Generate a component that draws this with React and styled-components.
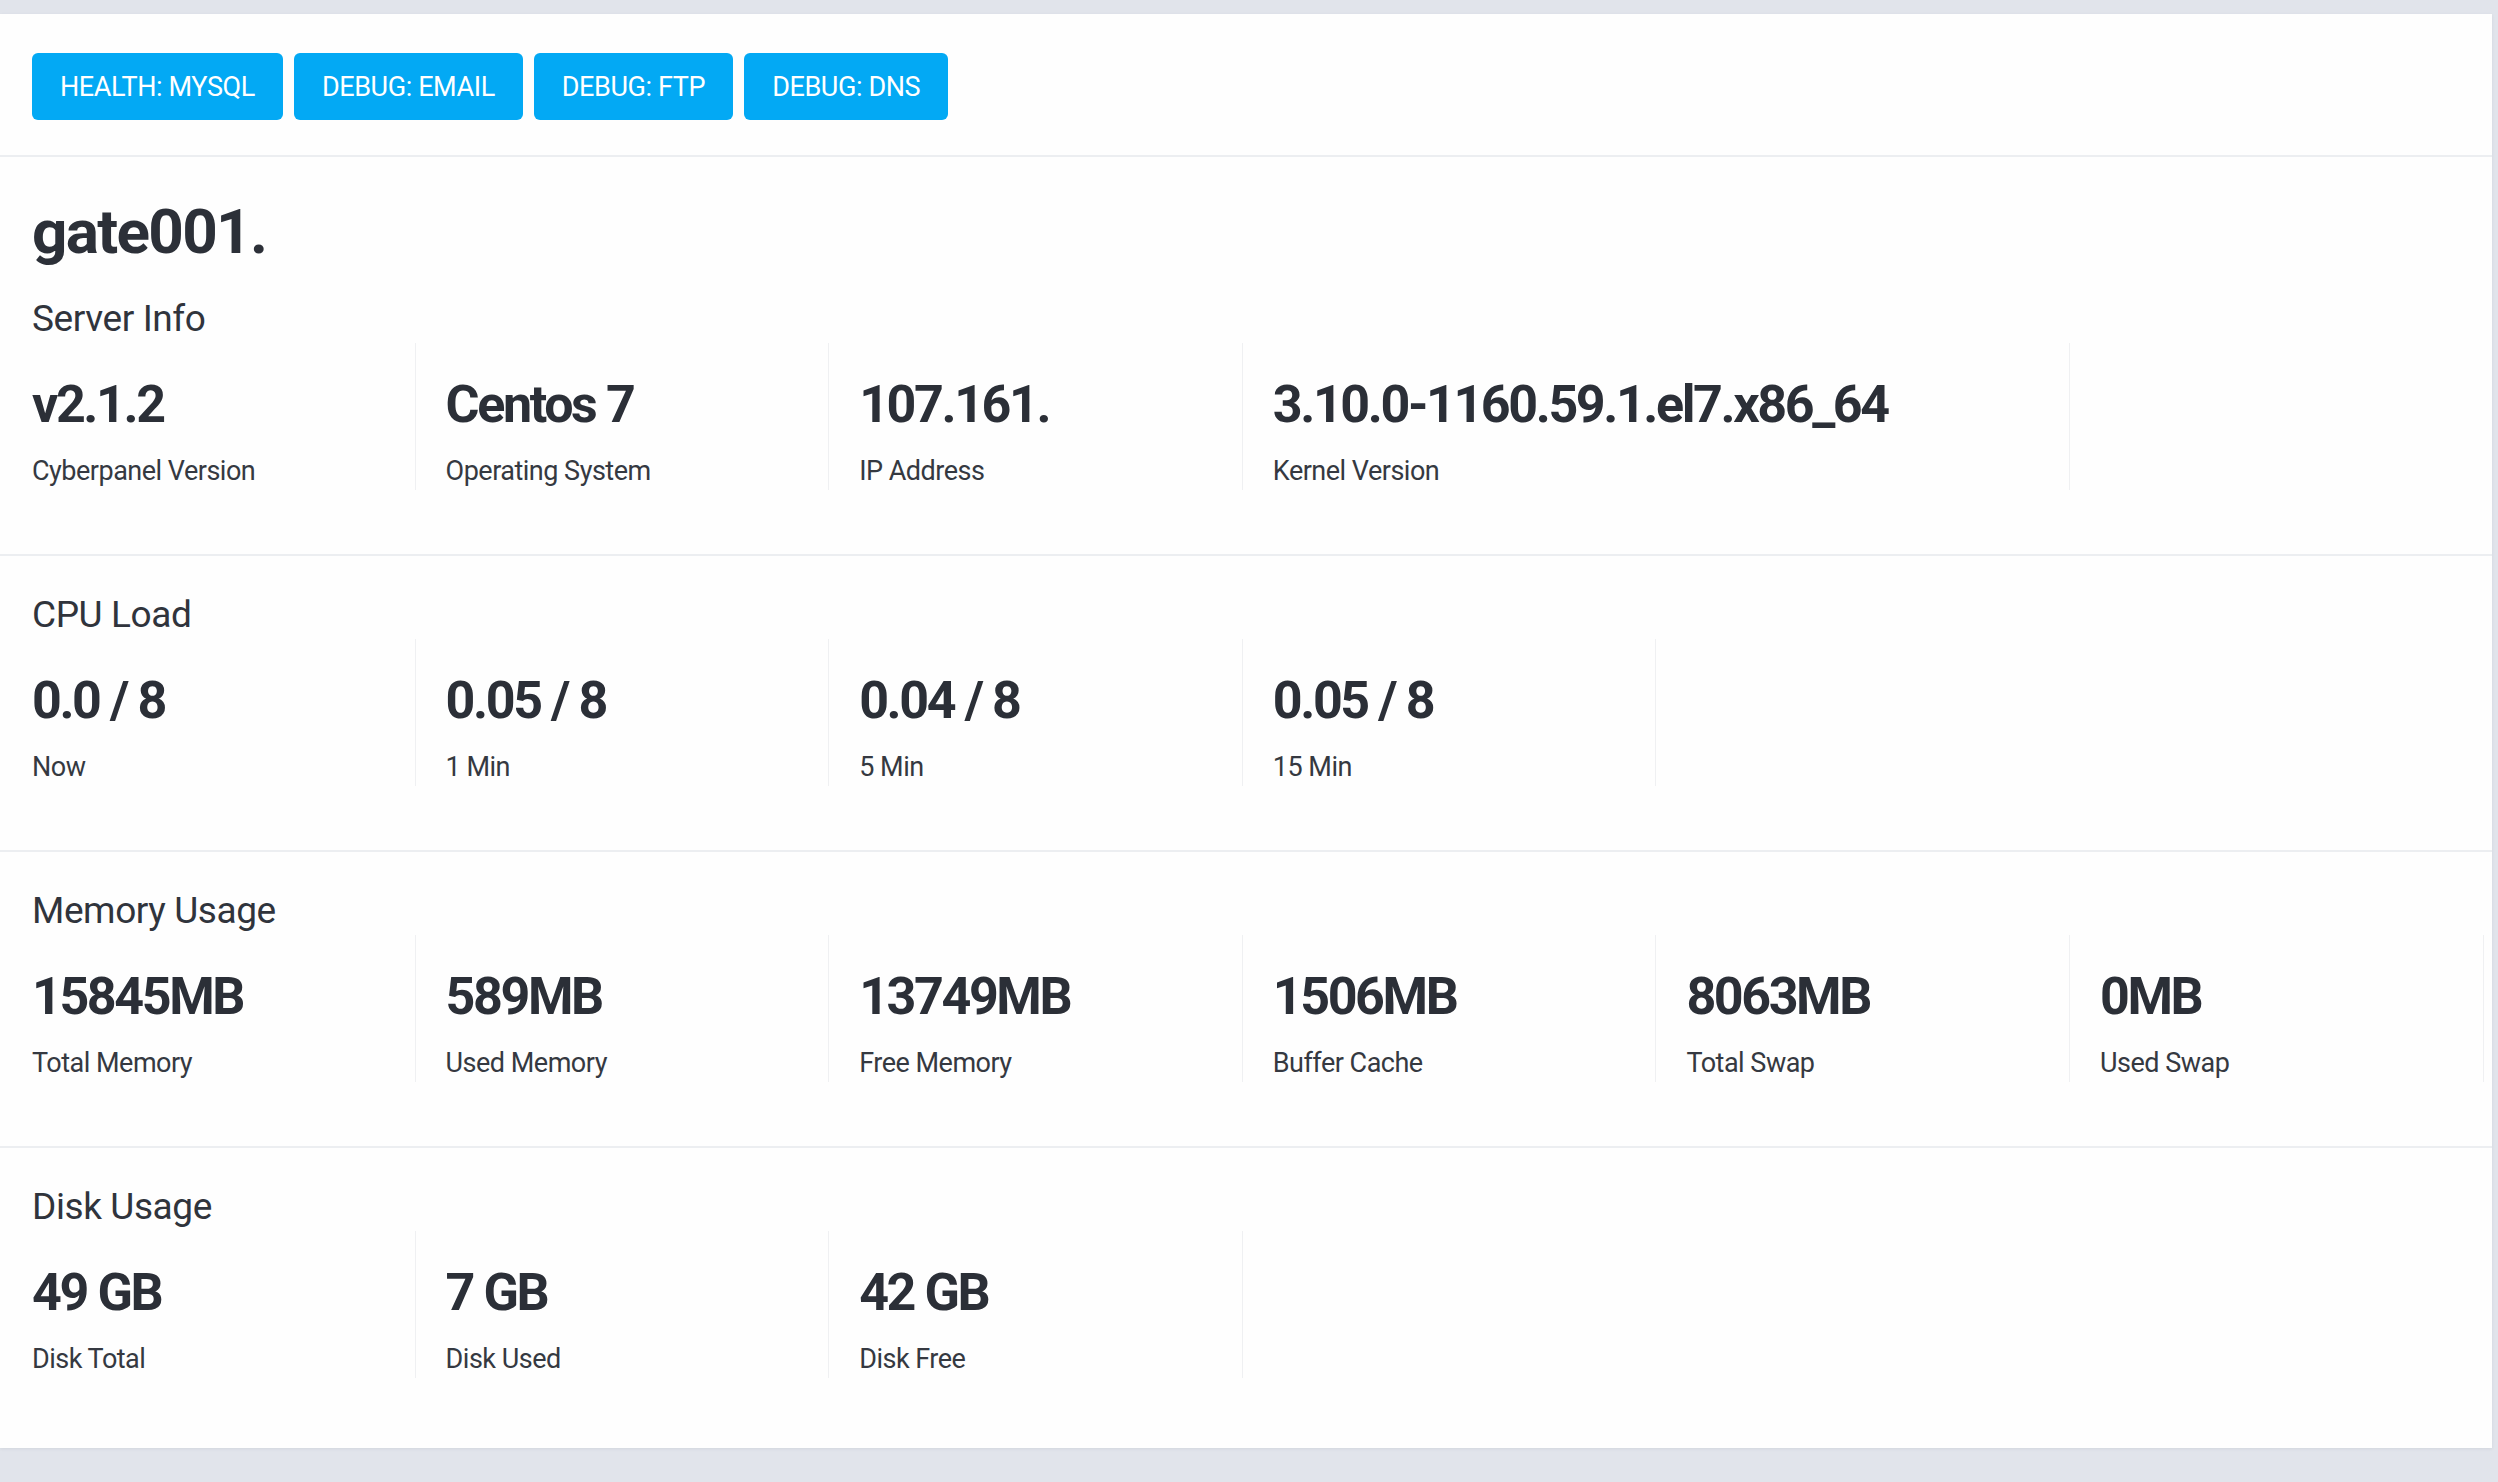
import React from "react";
import styled, { createGlobalStyle } from "styled-components";

const Global = createGlobalStyle`
  html, body { margin: 0; padding: 0; }
  body {
    background: #e1e4eb;
    font-family: Roboto, "Liberation Sans", Arial, sans-serif;
    color: #2e323a;
  }
  * { box-sizing: border-box; }
`;

const Page = styled.div`
  padding: 14px 6px 36px 0;
  min-height: 1482px;
`;

const Card = styled.div`
  background: #fefefe;
  box-shadow: 0 1px 3px rgba(40, 50, 80, 0.08);
`;

const Toolbar = styled.div`
  display: flex;
  gap: 11px;
  padding: 39px 32px 35px;
  border-bottom: 2px solid #eceef1;
`;

const Button = styled.button`
  height: 67px;
  padding: 0 28px;
  border: none;
  border-radius: 6px;
  background: #03a9f4;
  color: #fff;
  font-family: Roboto, "Liberation Sans", Arial, sans-serif;
  font-size: 27px;
  letter-spacing: -0.4px;
  font-weight: 400;
  text-transform: uppercase;
  cursor: pointer;
`;

const Section = styled.section`
  padding: ${(p) => (p.first ? "40px" : "35px")} 0 ${(p) => (p.last ? "70px" : "64px")} 32px;
  border-bottom: ${(p) => (p.last ? "none" : "2px solid #eceef1")};
`;

const Title = styled.h1`
  margin: 0 0 28px;
  font-size: 62px;
  line-height: 70px;
  font-weight: 700;
  letter-spacing: -1.7px;
  color: #2c3038;
`;

const Heading = styled.h2`
  margin: 0;
  font-size: 37px;
  line-height: 48px;
  font-weight: 400;
  letter-spacing: -0.4px;
  color: #30343c;
`;

const Row = styled.div`
  display: flex;
  margin-left: -30px;
`;

const Col = styled.div`
  width: ${(p) => (p.span || 1) * 413.6}px;
  flex: none;
  padding: 33px 0 1px 30px;
  border-right: 1px solid #eff0f2;
`;

const Value = styled.div`
  font-size: 52px;
  line-height: 58px;
  font-weight: 700;
  letter-spacing: -2.4px;
  color: #2b2f37;
  white-space: nowrap;
`;

const Label = styled.div`
  margin-top: 19px;
  font-size: 27px;
  line-height: 36px;
  font-weight: 400;
  letter-spacing: -0.5px;
  color: #353941;
`;

const Stat = ({ value, label, span }) => (
  <Col span={span}>
    <Value>{value}</Value>
    <Label>{label}</Label>
  </Col>
);

const buttons = ["Health: MySQL", "Debug: Email", "Debug: FTP", "Debug: DNS"];

const sections = [
  {
    title: "Server Info",
    items: [
      ["v2.1.2", "Cyberpanel Version"],
      ["Centos 7", "Operating System"],
      ["107.161.", "IP Address"],
      ["3.10.0-1160.59.1.el7.x86_64", "Kernel Version", 2],
    ],
  },
  {
    title: "CPU Load",
    items: [
      ["0.0 / 8", "Now"],
      ["0.05 / 8", "1 Min"],
      ["0.04 / 8", "5 Min"],
      ["0.05 / 8", "15 Min"],
    ],
  },
  {
    title: "Memory Usage",
    items: [
      ["15845MB", "Total Memory"],
      ["589MB", "Used Memory"],
      ["13749MB", "Free Memory"],
      ["1506MB", "Buffer Cache"],
      ["8063MB", "Total Swap"],
      ["0MB", "Used Swap"],
    ],
  },
  {
    title: "Disk Usage",
    items: [
      ["49 GB", "Disk Total"],
      ["7 GB", "Disk Used"],
      ["42 GB", "Disk Free"],
    ],
  },
];

export default function App() {
  return (
    <>
      <Global />
      <Page>
        <Card>
          <Toolbar>
            {buttons.map((b) => (
              <Button key={b}>{b}</Button>
            ))}
          </Toolbar>
          {sections.map((s, i) => (
            <Section key={s.title} first={i === 0} last={i === sections.length - 1}>
              {i === 0 && <Title>gate001.</Title>}
              <Heading>{s.title}</Heading>
              <Row>
                {s.items.map(([v, l, span]) => (
                  <Stat key={l} value={v} label={l} span={span} />
                ))}
              </Row>
            </Section>
          ))}
        </Card>
      </Page>
    </>
  );
}
